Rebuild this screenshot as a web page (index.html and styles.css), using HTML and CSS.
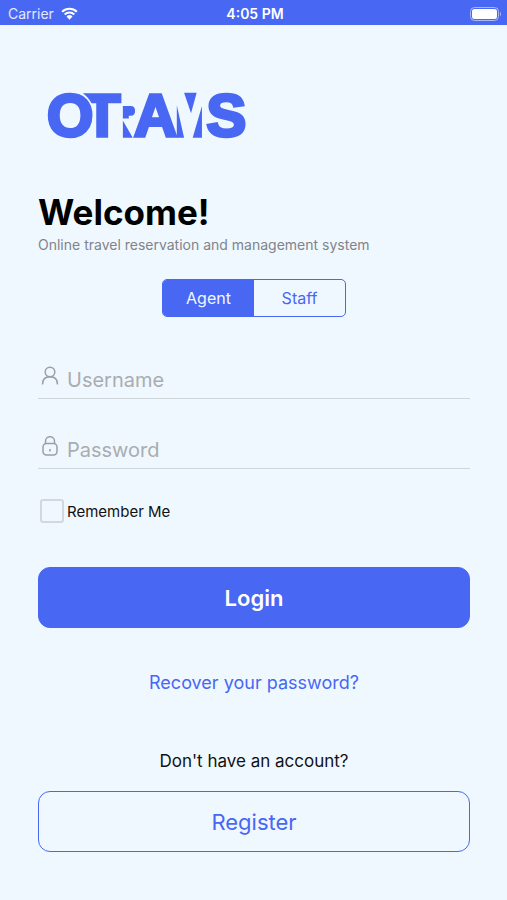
FILE: index.html
```html
<!DOCTYPE html>
<html lang="en">
<head>
  <meta charset="UTF-8">
  <meta name="viewport" content="width=device-width, initial-scale=1.0">
  <title>OTRAMS</title>
  <link rel="stylesheet" href="styles.css">
</head>
<body>
  <header class="status-bar">
    <div class="status-left">
      <span>Carrier</span>
      <svg class="wifi" viewBox="0 0 18 13" aria-hidden="true">
        <path d="M1.2 4.6a11.4 11.4 0 0 1 15.6 0M3.9 7.5a7.4 7.4 0 0 1 10.2 0" fill="none" stroke="#fff" stroke-width="2.2"/>
        <path d="M9 13 5.8 9.7a4.6 4.6 0 0 1 6.4 0z" fill="#fff"/>
      </svg>
    </div>
    <span class="status-time">4:05 PM</span>
    <svg class="battery" viewBox="0 0 32 14" aria-hidden="true">
      <rect x="0.5" y="0.5" width="28" height="13" rx="4" fill="none" stroke="#a9b7fa"/>
      <rect x="2" y="2" width="25" height="10" rx="2.5" fill="#fff"/>
      <path d="M30 4.5q2 2.5 0 5z" fill="#a9b7fa"/>
    </svg>
  </header>

  <main class="content">
    <svg class="logo" viewBox="24 36 600 142" role="img" aria-label="OTRAMS">
      <g class="logo-text">
        <text x="131" y="168">T</text>
        <ellipse class="logo-cut" cx="89" cy="106" rx="73" ry="77"/>
        <text x="19" y="168">O</text>
        <text x="282" y="168">A</text>
        <text x="501" y="168">S</text>
      </g>
      <!-- openings of the negative-space letters -->
      <g class="logo-shapes">
        <path d="M248 78h24q13 0 13 15t-13 15h-6v8h-18z"/>
        <path d="M248 122l30 52h-30z"/>
        <path d="M411 76l22 98h-22z"/>
        <path d="M433 38h38l-17 62z"/>
        <path d="M487 78v96h-28z"/>
      </g>
    </svg>

    <h1>Welcome!</h1>
    <p class="subtitle">Online travel reservation and management system</p>

    <form class="login-form">
      <div class="tabs">
        <button type="button" class="tab active">Agent</button>
        <button type="button" class="tab">Staff</button>
      </div>

      <div class="field">
        <label for="username" aria-label="Username">
          <svg class="field-icon" viewBox="0 0 18 20" aria-hidden="true">
            <circle cx="9" cy="6" r="4.8"/>
            <path d="M1.5 18.5c0-5 3-7.7 7.5-7.7s7.5 2.7 7.5 7.7"/>
          </svg>
        </label>
        <input type="text" id="username" name="username" placeholder="Username">
      </div>

      <div class="field">
        <label for="password" aria-label="Password">
          <svg class="field-icon" viewBox="0 0 18 20" aria-hidden="true">
            <rect x="2" y="7.5" width="14" height="11.5" rx="3.5"/>
            <path d="M4.5 8V5.2a4.5 4.5 0 0 1 9 0V8M9 13v2.5"/>
          </svg>
        </label>
        <input type="password" id="password" name="password" placeholder="Password">
      </div>

      <div class="remember">
        <input type="checkbox" id="remember" name="remember">
        <label for="remember">Remember Me</label>
      </div>

      <button type="submit" class="btn login">Login</button>
    </form>

    <a class="recover" href="#">Recover your password?</a>
    <p class="question">Don't have an account?</p>
    <button type="button" class="btn register">Register</button>
  </main>
</body>
</html>
```

FILE: styles.css
```css
* {
  box-sizing: border-box;
}

body {
  margin: 0;
  font-family: "Inter", sans-serif;
  background: #f0f8ff;
  color: #111;
}

button,
input {
  font-family: inherit;
}

.status-bar {
  display: grid;
  grid-template-columns: 1fr auto 1fr;
  align-items: center;
  height: 25px;
  padding: 2px 5px 0 8px;
  background: #4867f3;
  color: #fff;
  font-size: 14px;
}

.status-left {
  display: flex;
  align-items: center;
  gap: 7px;
  color: #e3e8ff;
}

.wifi {
  width: 17px;
  height: 13px;
}

.status-time {
  font-weight: 600;
}

.battery {
  width: 32px;
  height: 14px;
  justify-self: end;
}

.content {
  display: flex;
  flex-direction: column;
  padding: 67px 37px 48px 38px;
}

.logo {
  width: 200px;
  height: 47px;
  margin-left: 10px;
  overflow: visible;
}

.logo-text {
  font-family: "Liberation Sans", sans-serif;
  font-size: 180px;
  font-weight: bold;
  fill: #4867f3;
  stroke: #4867f3;
  stroke-width: 10px;
}

.logo-cut {
  fill: #f0f8ff;
  stroke: none;
}

.logo-shapes {
  fill: #4867f3;
}

h1 {
  margin: 52px 0 0;
  font-size: 35px;
  font-weight: 700;
  line-height: 42px;
  color: #000;
}

.subtitle {
  margin: 2px 0 0;
  font-size: 14px;
  line-height: 20px;
  color: #808489;
}

.login-form {
  display: flex;
  flex-direction: column;
}

.tabs {
  display: flex;
  align-self: center;
  width: 184px;
  height: 38px;
  margin: 24px 0 36px;
  border: 1px solid #4867f3;
  border-radius: 5px;
  overflow: hidden;
}

.tab {
  flex: 1;
  border: none;
  background: transparent;
  color: #4867f3;
  font-size: 16px;
  cursor: pointer;
}

.tab.active {
  background: #4867f3;
  color: #f0f8ff;
}

.field {
  display: flex;
  align-items: center;
  gap: 8px;
  height: 46px;
  padding-left: 3px;
  margin-bottom: 24px;
  border-bottom: 1px solid #cfd6da;
}

.field-icon {
  display: block;
  width: 18px;
  height: 20px;
  fill: none;
  stroke: #9b9fa3;
  stroke-width: 1.5px;
}

.field input {
  flex: 1;
  min-width: 0;
  height: 40px;
  padding: 8px 0 0;
  border: none;
  outline: none;
  background: transparent;
  font-size: 20px;
}

.field input::placeholder {
  color: #a9adb0;
}

.remember {
  display: flex;
  align-items: center;
  gap: 3px;
  margin: 6px 0 44px 2px;
  font-size: 15px;
}

.remember input {
  appearance: none;
  width: 24px;
  height: 24px;
  margin: 0;
  border: 2px solid #d3d8dc;
  border-radius: 3px;
}

.remember input:checked {
  background: #4867f3;
}

.btn {
  height: 61px;
  border: 1px solid #4867f3;
  border-radius: 12px;
  font-size: 22px;
  cursor: pointer;
}

.login {
  background: #4867f3;
  color: #fff;
  font-weight: 600;
}

.recover {
  align-self: center;
  margin-top: 43px;
  font-size: 18px;
  line-height: 24px;
  color: #4867f3;
  text-decoration: none;
}

.question {
  margin: 54px 0 18px;
  font-size: 17px;
  line-height: 24px;
  text-align: center;
}

.register {
  background: transparent;
  color: #4867f3;
}
```
